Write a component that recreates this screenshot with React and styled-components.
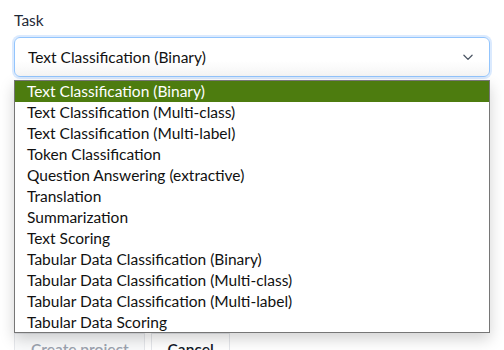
import React from "react";
import styled, { createGlobalStyle } from "styled-components";

const GlobalStyle = createGlobalStyle`
  body {
    margin: 0;
    background: #ffffff;
    font-family: "Lato", "Noto Sans", sans-serif;
    color: #111827;
  }
`;

const Page = styled.div`
  position: relative;
  width: 504px;
  height: 350px;
  overflow: hidden;
  padding: 10px 14px 0 14px;
  box-sizing: border-box;
`;

const Label = styled.div`
  font-size: 15.5px;
  line-height: 20px;
  color: #1f2937;
  margin-bottom: 7px;
`;

const SelectBox = styled.div`
  position: relative;
  height: 40px;
  width: 476px;
  box-sizing: border-box;
  border: 1px solid #93c5fd;
  border-radius: 6px;
  box-shadow: 0 0 0 2px #dbeafe;
  background: linear-gradient(to bottom, #ffffff 60%, #f5f5f5);
  display: flex;
  align-items: center;
  justify-content: space-between;
  padding: 0 14px 0 13px;
  font-size: 15.5px;
  color: #111;
`;

const Chevron = styled.svg`
  width: 14px;
  height: 14px;
  color: #4b5563;
`;

const Buttons = styled.div`
  display: flex;
  gap: 6px;
  margin-top: 256px;
  height: 34px;
`;

const Button = styled.div`
  padding: 6px 15px 6px 16px;
  font-size: 15.5px;
  font-weight: 600;
  border: 1px solid #e5e7eb;
  background: ${p => (p.disabled ? "#f9fafb" : "#fff")};
  color: ${p => (p.disabled ? "#9ca3af" : "#111827")};
`;

const List = styled.ul`
  position: absolute;
  left: 14px;
  top: 80px;
  width: 476px;
  height: 253px;
  box-sizing: border-box;
  margin: 0;
  padding: 0;
  list-style: none;
  background: #fff;
  border: 1px solid #767676;
  box-shadow: 0 6px 14px rgba(0, 0, 0, 0.18);
`;

const Option = styled.li`
  height: 21px;
  line-height: 21px;
  padding-left: 12px;
  font-size: 15.5px;
  color: ${p => (p.selected ? "#ffffff" : "#111")};
  background: ${p => (p.selected ? "#4d7c0f" : "transparent")};
`;

const tasks = [
  "Text Classification (Binary)",
  "Text Classification (Multi-class)",
  "Text Classification (Multi-label)",
  "Token Classification",
  "Question Answering (extractive)",
  "Translation",
  "Summarization",
  "Text Scoring",
  "Tabular Data Classification (Binary)",
  "Tabular Data Classification (Multi-class)",
  "Tabular Data Classification (Multi-label)",
  "Tabular Data Scoring",
];

export default function App() {
  return (
    <>
      <GlobalStyle />
      <Page>
        <Label>Task</Label>
        <SelectBox>
          <span>{tasks[0]}</span>
          <Chevron viewBox="0 0 24 24" fill="none" stroke="currentColor" strokeWidth="2.2" strokeLinecap="round" strokeLinejoin="round">
            <path d="M5 9l7 7 7-7" />
          </Chevron>
        </SelectBox>
        <Buttons>
          <Button disabled>Create project</Button>
          <Button>Cancel</Button>
        </Buttons>
        <List>
          {tasks.map((t, i) => (
            <Option key={t} selected={i === 0}>{t}</Option>
          ))}
        </List>
      </Page>
    </>
  );
}
